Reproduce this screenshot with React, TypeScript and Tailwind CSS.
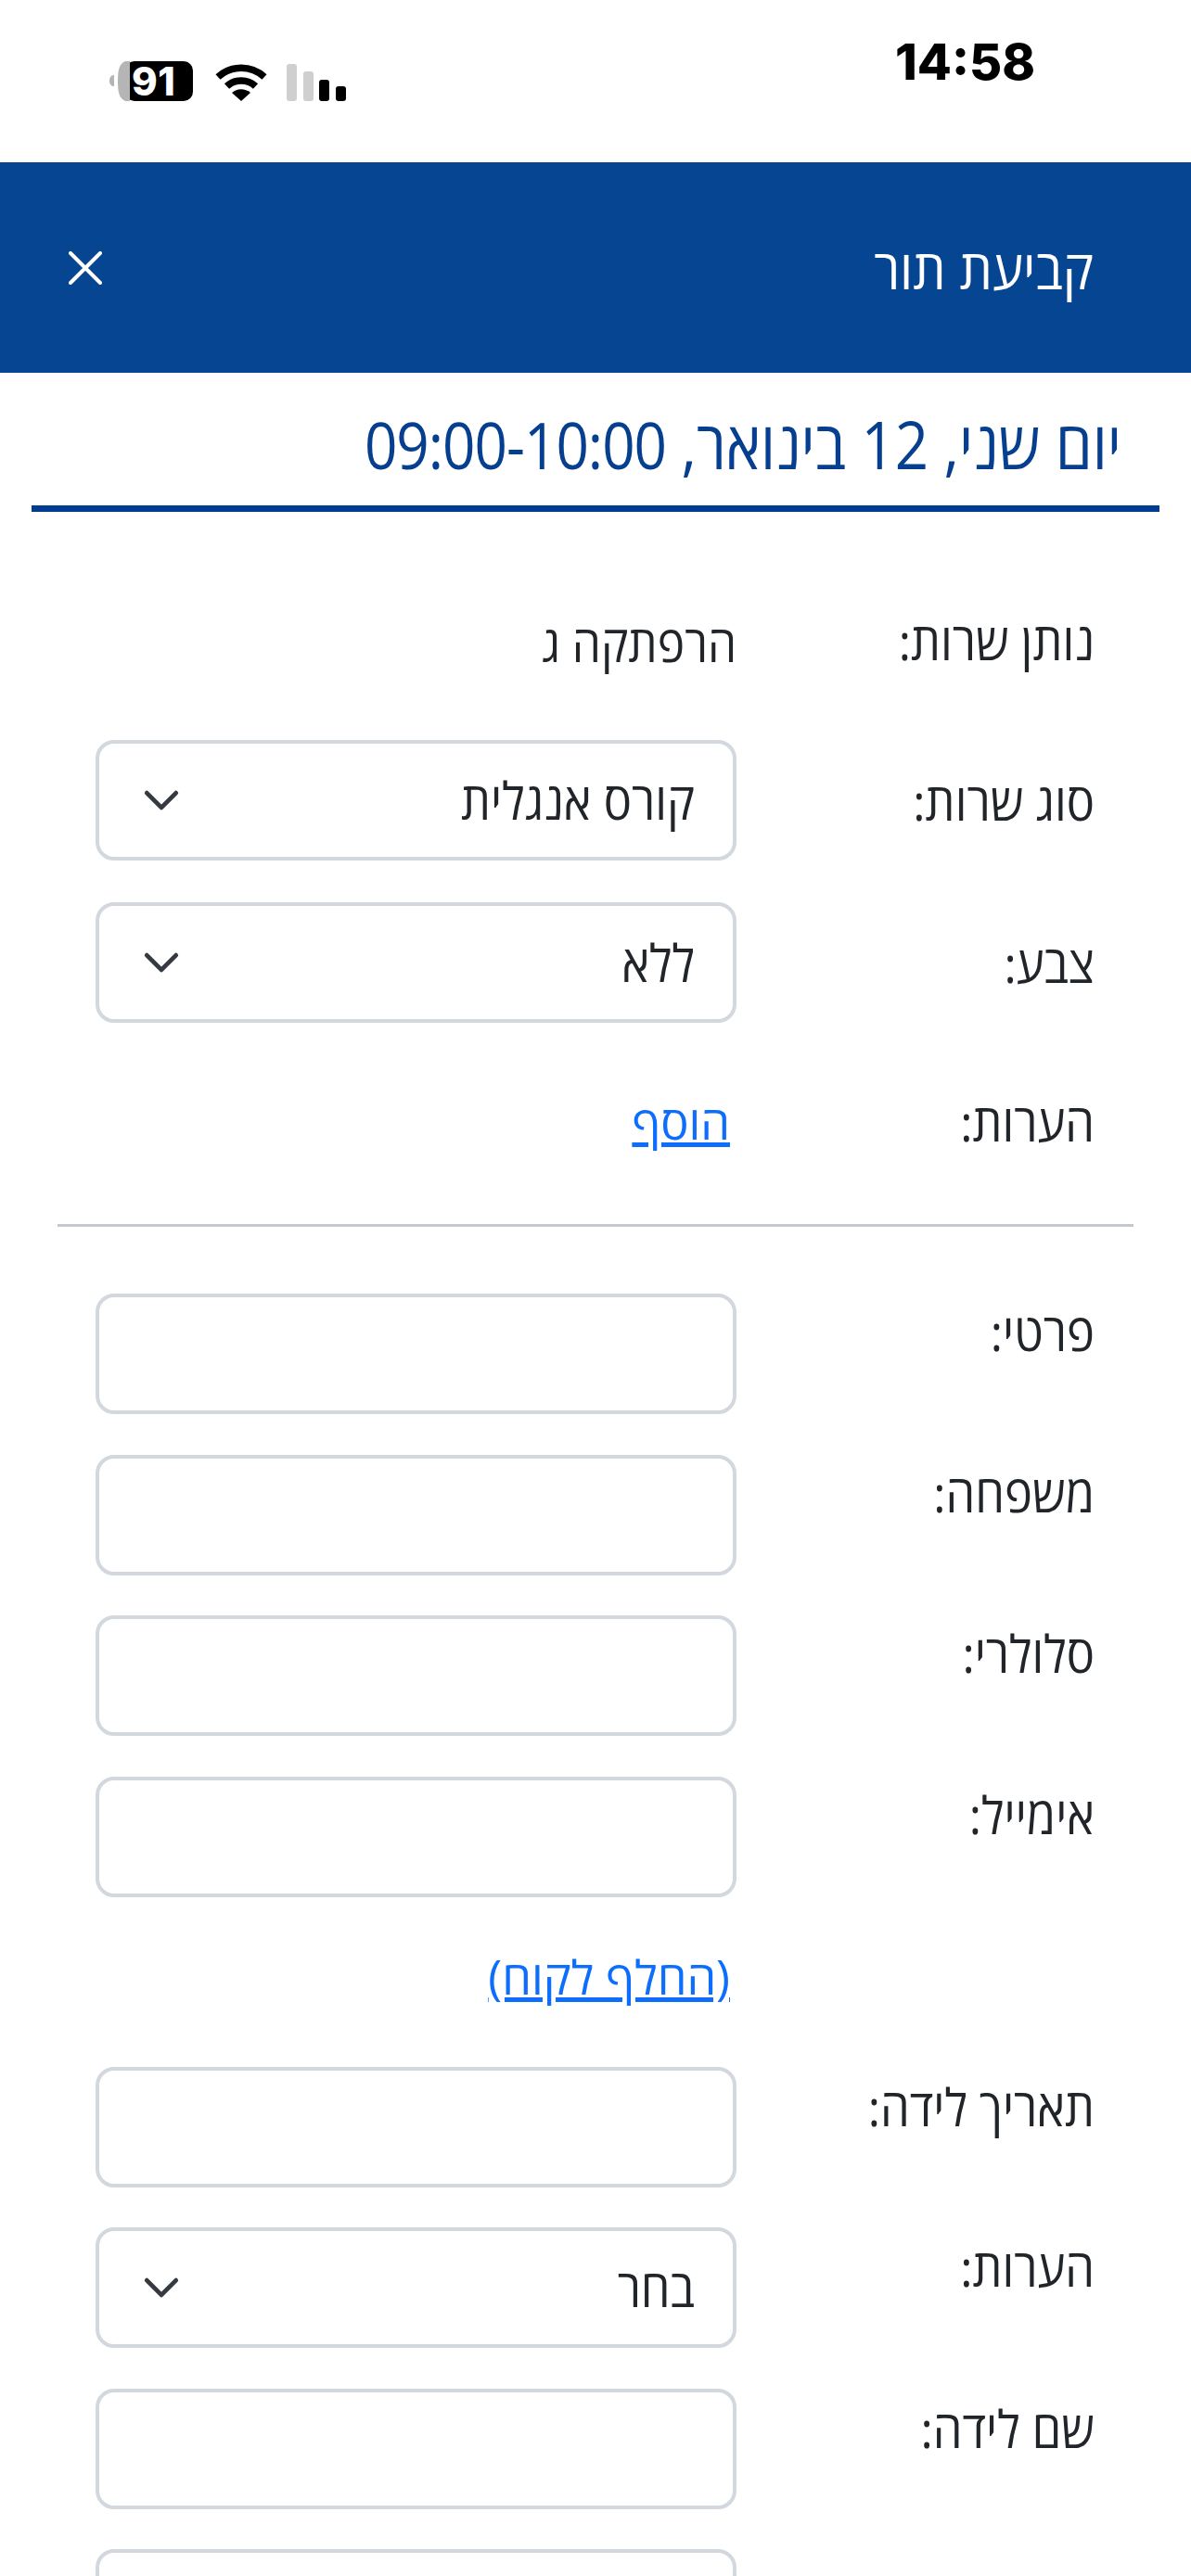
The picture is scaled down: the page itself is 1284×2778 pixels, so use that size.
const font = "font-['Open_Sans','Noto_Sans','Liberation_Sans',sans-serif]";

function Chevron() {
  return (
    <svg width="42" height="42" viewBox="0 0 16 16" fill="none" className="shrink-0">
      <path d="M2 5l6 6 6-6" stroke="#343a40" strokeWidth="1.800" strokeLinecap="round" strokeLinejoin="round" />
    </svg>
  );
}

function Row({ label, className, labelClass, children }: { label: string; className: string; labelClass: string; children: React.ReactNode }) {
  return (
    <div className={`flex h-[130px] pl-[103px] pr-[104px] ${className}`}>
      <div className={`w-[386px] shrink-0 ${labelClass}`}>
        <div className="scale-y-[1.1] text-[50.500px] leading-[60px] text-[#212529]">{label}</div>
      </div>
      <div className="w-[691px] shrink-0">{children}</div>
    </div>
  );
}

function Field() {
  return <input className="block h-[130px] w-[691px] rounded-[20px] border-4 border-[#d3d8de] bg-white outline-none" />;
}

function Select({ value }: { value: string }) {
  return (
    <div className="flex h-[130px] w-[691px] items-center justify-between rounded-[20px] border-4 border-[#d3d8de] bg-white pl-[46px] pr-[41px] text-[#212529]">
      <span className="scale-y-[1.1] text-[50.500px]">{value}</span>
      <Chevron />
    </div>
  );
}

export default function App() {
  return (
    <div dir="rtl" className={`h-[2778px] w-[1284px] overflow-hidden bg-white ${font}`}>
      <div dir="ltr" className="flex h-[175px] items-start justify-between pl-[118px] pr-[168px]">
        <div className="mt-[66px] flex items-end">
          <div className="relative h-[43px] w-[90px] shrink-0">
            <svg width="90" height="43" viewBox="0 0 90 43">
              <path d="M0 21c0-4 2-6 5-6v12c-3 0-5-2-5-6z" fill="#b5b5b5" />
              <rect x="17" y="0" width="73" height="43" rx="10" fill="#000" />
              <path d="M17 0h5v43h-5c-6-3-8-8-8-21.500s2-18.500 8-21.500z" fill="#b5b5b5" />
            </svg>
            <span className="absolute left-[24px] top-0 font-['Inter',sans-serif] text-[42px] leading-[43px] font-extrabold tracking-[0.5px] text-white">91</span>
          </div>
          <svg width="56" height="42" viewBox="0 0 56 42" className="ml-[24px] shrink-0" fill="none">
            <path d="M3 16C17 3 39 3 53 16" stroke="#000" strokeWidth="7.500" />
            <path d="M12.500 26C21 18 35 18 43.500 26" stroke="#000" strokeWidth="7.500" />
            <path d="M18 33c6-5 14-5 20 0L28 42z" fill="#000" />
          </svg>
          <div className="ml-[21px] flex items-end gap-[6.500px]">
            <div className="h-[40px] w-[11px] rounded-[3px] bg-[#cfcfcf]" />
            <div className="h-[32px] w-[11px] rounded-[3px] bg-[#cfcfcf]" />
            <div className="h-[23px] w-[11px] rounded-[3px] bg-black" />
            <div className="h-[16px] w-[11px] rounded-[3px] bg-black" />
          </div>
        </div>
        <div className="mt-[43px] font-['Inter',sans-serif] text-[54px] leading-[48px] font-extrabold text-black">14:58</div>
      </div>

      <div className="flex h-[227px] items-center justify-between bg-[#064592] pl-[74px] pr-[105px] text-white">
        <div className="scale-y-[1.05] text-[56px] leading-[60px]">קביעת תור</div>
        <svg width="36" height="36" viewBox="0 0 36 36" fill="none" className="shrink-0">
          <path d="M2 2l32 32M34 2L2 34" stroke="#fff" strokeWidth="4" strokeLinecap="round" />
        </svg>
      </div>

      <div className="mx-[34px] flex h-[150px] items-center border-b-[7px] border-[#003d8f] pr-[41px] pt-[10px] text-[#063f8f]">
        <div className="scale-y-[1.13] text-[63.500px] leading-[80px]">
          יום שני, 12 בינואר, <span className="text-[62px] tracking-[-1px]">09:00-10:00</span>
        </div>
      </div>

      <Row label="נותן שרות:" className="mt-[76px] mb-[40px]" labelClass="pt-[33px]">
        <div className="scale-y-[1.1] pt-[33px] text-[49.500px] leading-[60px] text-[#212529]">הרפתקה ג</div>
      </Row>
      <Row label="סוג שרות:" className="mb-[45px]" labelClass="pt-[36px]">
        <Select value="קורס אנגלית" />
      </Row>
      <Row label="צבע:" className="" labelClass="pt-[36px]">
        <Select value="ללא" />
      </Row>
      <Row label="הערות:" className="mt-[43px]" labelClass="pt-[34px]">
        <div className="pt-[34px] pr-[7px] text-[50.500px] leading-[60px]"><a className="text-[#0d6efd] underline">הוסף</a></div>
      </Row>

      <div className="mx-[62px] mt-[44px] mb-[72px] h-[3px] bg-[#c4c8d0]" />

      <Row label="פרטי:" className="mb-[43.500px]" labelClass="pt-[11px]"><Field /></Row>
      <Row label="משפחה:" className="mb-[43.500px]" labelClass="pt-[11px]"><Field /></Row>
      <Row label="סלולרי:" className="mb-[43.500px]" labelClass="pt-[11px]"><Field /></Row>
      <Row label="אימייל:" className="" labelClass="pt-[11px]"><Field /></Row>
      <div className="mt-[56px] mb-[67px] h-[60px] pr-[497px] text-[50.500px] leading-[60px]">
        <a className="text-[#0d6efd] underline">(החלף לקוח)</a>
      </div>
      <Row label="תאריך לידה:" className="mb-[43.500px]" labelClass="pt-[13px]"><Field /></Row>
      <Row label="הערות:" className="mb-[43.500px]" labelClass="pt-[13px]"><Select value="בחר" /></Row>
      <Row label="שם לידה:" className="mb-[43.500px]" labelClass="pt-[13px]"><Field /></Row>
      <Row label="" className="" labelClass=""><Field /></Row>
    </div>
  );
}
